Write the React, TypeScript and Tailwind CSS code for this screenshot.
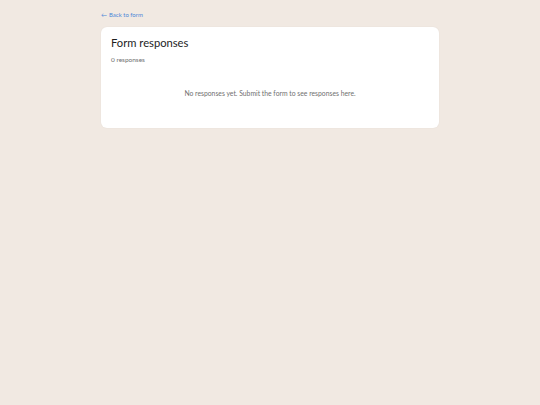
export default function App() {
  return (
    <div
      className="min-h-[405px] w-full bg-[#f1e9e2] text-[#222]"
      style={{ fontFamily: "Lato, 'Noto Sans', sans-serif" }}
    >
      <div className="mx-auto w-[338px] pt-[10px]">
        <a href="#" className="flex h-[10px] items-center gap-[2px] text-[6px] leading-[10px] text-[#4a86d8]">
          <span>←</span>
          <span>Back to form</span>
        </a>
        <div className="mt-[7px] rounded-[6px] bg-white px-[10px] pt-[8px] pb-[30px] shadow-[0_0_2px_rgba(0,0,0,0.06)]">
          <h1 className="text-[11.2px] leading-[16px] font-normal text-[#1e1e1e]">Form responses</h1>
          <p className="mt-[4px] text-[6.5px] leading-[9px] text-[#707070]">0 responses</p>
          <p className="mt-[25px] text-center text-[6.8px] leading-[9px] text-[#707070]">
            No responses yet. Submit the form to see responses here.
          </p>
        </div>
      </div>
    </div>
  );
}
